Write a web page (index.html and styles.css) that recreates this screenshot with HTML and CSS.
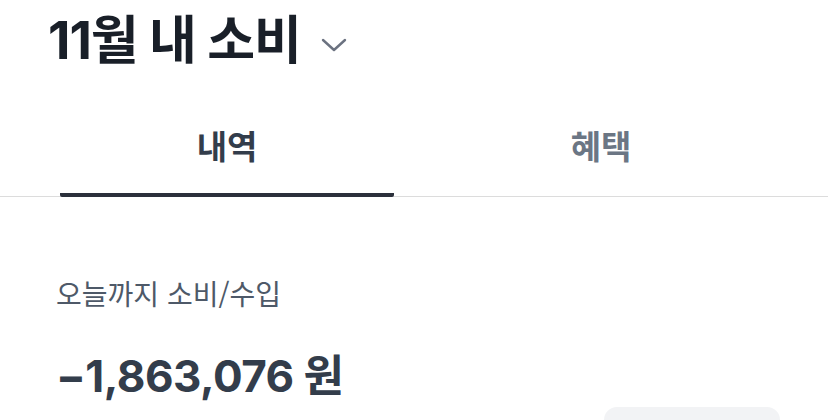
FILE: index.html
```html
<!DOCTYPE html>
<html lang="ko">
<head>
    <meta charset="UTF-8">
    <meta name="viewport" content="width=device-width, initial-scale=1.0">
    <title>11월 내 소비</title>
    <link rel="stylesheet" href="styles.css">
</head>
<body>
    <header class="top">
        <h1>11월 내 소비</h1>
        <svg class="chevron" width="26" height="14" viewBox="0 0 26 14">
            <path d="M2 2 L13 12 L24 2" fill="none" stroke="#6b7280" stroke-width="2.4" stroke-linecap="round" stroke-linejoin="round"/>
        </svg>
    </header>

    <nav class="tabs">
        <div class="tab active">내역</div>
        <div class="tab">혜택</div>
    </nav>

    <section class="summary">
        <p class="label">오늘까지 소비/수입</p>
        <p class="amount">−1,863,076 원</p>
        <div class="chip"></div>
    </section>
</body>
</html>
```

FILE: styles.css
```css
html, body {
    height: 420px;
}
body {
    margin: 0;
    padding: 0;
    background: #ffffff;
    font-family: "Noto Sans CJK KR", "Noto Sans", sans-serif;
    overflow: hidden;
}
.top {
    display: flex;
    align-items: center;
    padding: 4px 48px 0;
    height: 64px;
}
.top h1 {
    margin: 0;
    font-family: "Inter", "Noto Sans CJK KR", sans-serif;
    font-size: 52px;
    font-weight: 700;
    color: #191f28;
    letter-spacing: -1px;
}
.chevron {
    margin-left: 20px;
    margin-top: 17px;
}
.tabs {
    display: flex;
    gap: 40px;
    padding: 0 60px;
    margin-top: 48px;
    border-bottom: 1px solid #dcdcdc;
}
.tab {
    flex: 1;
    text-align: center;
    font-size: 33px;
    font-weight: 700;
    color: #6b7684;
    padding: 5px 0 24px;
    margin-bottom: -1px;
    border-bottom: 4px solid transparent;
}
.tab.active {
    color: #333d4b;
    border-bottom-color: #2b303b;
    border-radius: 2px;
}
.summary {
    padding: 76px 56px 0;
    position: relative;
}
.label {
    margin: 0;
    font-size: 28px;
    color: #4e5968;
}
.amount {
    margin: 28px 0 0;
    font-family: "Inter", "Noto Sans CJK KR", sans-serif;
    font-size: 44px;
    font-weight: 700;
    color: #333d4b;
    letter-spacing: -0.5px;
}
.chip {
    position: absolute;
    left: 604px;
    top: 210px;
    width: 176px;
    height: 13px;
    background: #f2f3f5;
    border-radius: 16px 16px 0 0;
}
```
